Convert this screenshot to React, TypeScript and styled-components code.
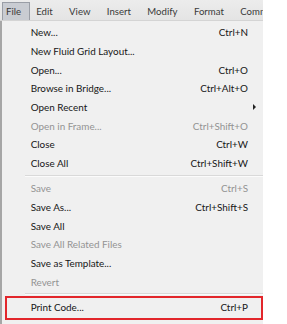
import React from "react";
import styled, { createGlobalStyle } from "styled-components";

const GlobalStyle = createGlobalStyle`
  html, body {
    margin: 0;
    padding: 0;
    background: #ffffff;
  }
  body {
    font-family: Lato, "Open Sans", sans-serif;
  }
`;

const Frame = styled.div`
  width: 263px;
  height: 324px;
  overflow: hidden;
  display: flex;
  flex-direction: column;
`;

const MenuBar = styled.div`
  height: 21px;
  flex: none;
  display: flex;
  align-items: stretch;
  overflow: hidden;
  padding: 2px 0 0 2px;
  box-sizing: border-box;
  background: linear-gradient(#ececec, #e4e4e4);
  border-bottom: 1px solid #d4d4d4;
  white-space: nowrap;
`;

const BarItem = styled.div<{ $active?: boolean }>`
  flex: none;
  display: flex;
  align-items: center;
  padding: ${(p) => (p.$active ? "0 8px 0 3px" : "0 7.2px")};
  margin-right: ${(p) => (p.$active ? "-2px" : "0")};
  font-size: 9.6px;
  color: #3a3a3a;
  border: 1px solid ${(p) => (p.$active ? "#9a9ea6" : "transparent")};
  border-bottom: none;
  background: ${(p) => (p.$active ? "#c9ccd2" : "transparent")};
  box-sizing: border-box;
`;

const Panel = styled.div`
  flex: 1;
  background: #f0f0f0;
  border-left: 2px solid #a6a6a6;
  padding-top: 2px;
  display: flex;
  flex-direction: column;
`;

const Row = styled.div<{ $disabled?: boolean; $marked?: boolean }>`
  position: relative;
  height: 18.67px;
  flex: none;
  display: grid;
  grid-template-columns: 1fr auto 15px;
  align-items: center;
  padding-left: 28.7px;
  font-size: 9.9px;
  color: ${(p) => (p.$disabled ? "#939393" : "#161616")};
  white-space: nowrap;

  ${(p) =>
    p.$marked &&
    `
    &::after {
      content: "";
      position: absolute;
      left: 3px;
      right: 0;
      top: -2px;
      bottom: -3.5px;
      border: 2px solid #e2262b;
    }
  `}
`;

const Shortcut = styled.span`
  text-align: right;
`;

const Arrow = styled.span`
  justify-self: center;
  margin-right: 3px;
  width: 0;
  height: 0;
  border-top: 3px solid transparent;
  border-bottom: 3px solid transparent;
  border-left: 3px solid #222;
`;

const Separator = styled.div`
  height: 6.67px;
  flex: none;
  display: flex;
  align-items: center;
  padding-left: 23px;

  &::before {
    content: "";
    flex: 1;
    height: 1px;
    background: #d9d9d9;
    border-bottom: 1px solid #fbfbfb;
  }
`;

type Item =
  | { sep: true }
  | {
      label: string;
      key?: string;
      disabled?: boolean;
      sub?: boolean;
      marked?: boolean;
    };

const items: Item[] = [
  { label: "New...", key: "Ctrl+N" },
  { label: "New Fluid Grid Layout..." },
  { label: "Open...", key: "Ctrl+O" },
  { label: "Browse in Bridge...", key: "Ctrl+Alt+O" },
  { label: "Open Recent", sub: true },
  { label: "Open in Frame...", key: "Ctrl+Shift+O", disabled: true },
  { label: "Close", key: "Ctrl+W" },
  { label: "Close All", key: "Ctrl+Shift+W" },
  { sep: true },
  { label: "Save", key: "Ctrl+S", disabled: true },
  { label: "Save As...", key: "Ctrl+Shift+S" },
  { label: "Save All" },
  { label: "Save All Related Files", disabled: true },
  { label: "Save as Template..." },
  { label: "Revert", disabled: true },
  { sep: true },
  { label: "Print Code...", key: "Ctrl+P", marked: true },
];

const menus = ["File", "Edit", "View", "Insert", "Modify", "Format", "Commands"];

export default function App() {
  return (
    <>
      <GlobalStyle />
      <Frame>
        <MenuBar>
          {menus.map((m, i) => (
            <BarItem key={m} $active={i === 0}>
              {m}
            </BarItem>
          ))}
        </MenuBar>
        <Panel>
          {items.map((it, i) =>
            "sep" in it ? (
              <Separator key={i} />
            ) : (
              <Row key={i} $disabled={it.disabled} $marked={it.marked}>
                <span>{it.label}</span>
                <Shortcut>{it.key}</Shortcut>
                {it.sub ? <Arrow /> : <span />}
              </Row>
            )
          )}
        </Panel>
      </Frame>
    </>
  );
}
